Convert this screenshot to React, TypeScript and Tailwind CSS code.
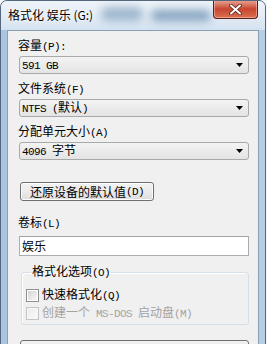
import React from "react";

function Mixed({ text }: { text: string }) {
  const parts = text.split(/([\x20-\x7e]+)/).filter(Boolean);
  return (
    <>
      {parts.map((p, i) =>
        /^[\x20-\x7e]+$/.test(p) ? (
          <span key={i} className="font-['Liberation_Mono',monospace] text-[11px] tracking-[-0.6px] whitespace-pre">
            {p}
          </span>
        ) : (
          <span key={i}>{p}</span>
        )
      )}
    </>
  );
}

function Label({ text, className = "" }: { text: string; className?: string }) {
  return (
    <div className={`h-[16px] leading-[16px] whitespace-pre ${className}`}>
      <Mixed text={text} />
    </div>
  );
}

function Combo({ text }: { text: string }) {
  return (
    <div className="ml-[1px] mt-[3px] h-[18px] w-[230px] rounded-[3px] border border-[#a9a9a9] bg-linear-to-b from-[#f3f3f3] to-[#e4e4e4] flex items-center justify-between pl-[2px] pr-[5px] leading-[16px]">
      <div className="whitespace-pre">
        <Mixed text={text} />
      </div>
      <svg width="7" height="4" viewBox="0 0 7 4">
        <polygon points="0,0 7,0 3.5,4" fill="#000" />
      </svg>
    </div>
  );
}

function Check({ text, disabled }: { text: string; disabled?: boolean }) {
  return (
    <div className={`flex items-center gap-[3px] h-[16px] leading-[16px] ${disabled ? "text-[#a3a3a3]" : "text-black"}`}>
      <div
        className={`w-[13px] h-[13px] border p-[1px] ${
          disabled ? "border-[#c4c4c4] bg-[#f7f7f7]" : "border-[#8e8f8f] bg-white"
        }`}
      >
        <div
          className={`w-full h-full ${
            disabled ? "bg-linear-to-br from-[#ececec] to-[#fafafa]" : "bg-linear-to-br from-[#d4d4d4] to-[#f7f7f7]"
          }`}
        />
      </div>
      <div className="whitespace-pre">
        <Mixed text={text} />
      </div>
    </div>
  );
}

export default function App() {
  return (
    <div className="w-[267px] h-[344px] overflow-hidden bg-[#f3f6f9] font-['Noto_Sans_CJK_SC',sans-serif] text-[12px] text-black">
      <div className="w-[266px] h-[380px] rounded-t-[7px] border border-[#54677c] bg-linear-to-r from-[#a9c4df] via-[#c9dbee] to-[#b7cde4] flex flex-col">
        <div className="relative h-[29px] flex justify-between pl-[7px] pr-[7px] rounded-t-[6px] bg-linear-to-b from-[#eef3f8] via-[#e4ecf5] to-[#d4e2f0] overflow-hidden">
          <div className="absolute left-[100px] top-[6px] w-[42px] h-[14px] rounded-full bg-[#8eabc4] blur-[4px] opacity-80" />
          <div className="absolute left-[150px] top-[9px] w-[60px] h-[11px] rounded-full bg-[#6f93b4] blur-[4px] opacity-80" />
          <div className="relative pt-[6px] leading-[16px] whitespace-pre [text-shadow:0_0_6px_#fff,0_0_3px_#fff]">
            格式化 娱乐 (G:)
          </div>
          <div className="relative -mt-[1px] w-[45px] h-[19px] rounded-b-[4px] border border-t-0 border-[#5a1f16] bg-linear-to-b from-[#e7a898] via-[#c8452f] to-[#d9704f] flex items-center justify-center shadow-[inset_0_0_0_1px_rgba(255,220,210,0.45)]">
            <svg width="13" height="11" viewBox="0 0 13 11">
              <path d="M2 1.5 L11 9.5 M11 1.5 L2 9.5" stroke="#5a1f16" strokeWidth="3.6" strokeLinecap="round" />
              <path d="M2 1.5 L11 9.5 M11 1.5 L2 9.5" stroke="#ffffff" strokeWidth="2" strokeLinecap="round" />
            </svg>
          </div>
        </div>
        <div className="mx-[6px] flex-1 border border-[#8a9fb4] bg-[#f0f0f0] pl-[10px] pt-[6px]">
          <Label text="容量(P):" />
          <Combo text="591 GB" />
          <Label text="文件系统(F)" className="mt-[6px]" />
          <Combo text="NTFS (默认)" />
          <Label text="分配单元大小(A)" className="mt-[6px]" />
          <Combo text="4096 字节" />
          <div className="ml-[2px] mt-[22px] h-[19px] w-[134px] rounded-[3px] border border-[#707070] bg-linear-to-b from-[#f2f2f2] via-[#ebebeb] to-[#dcdcdc] flex items-center justify-center leading-[16px] shadow-[inset_0_0_0_1px_#fcfcfc]">
            <Mixed text="还原设备的默认值(D)" />
          </div>
          <Label text="卷标(L)" className="mt-[13px]" />
          <div className="ml-[1px] mt-[6px] h-[20px] w-[230px] border border-[#abadb3] border-t-[#a0a3a9] bg-white flex items-center pl-[2px] leading-[16px]">
            娱乐
          </div>
          <fieldset className="ml-[3px] mt-[7px] w-[228px] rounded-[3px] border border-[#d5dfe5] pl-[4px] pb-[3px] shadow-[inset_1px_1px_0_#fff]">
            <legend className="ml-[5px] px-[1px] leading-[16px] whitespace-pre">
              <Mixed text="格式化选项(O)" />
            </legend>
            <div className="mt-[6px]">
              <Check text="快速格式化(Q)" />
            </div>
            <div className="mt-[2px]">
              <Check text="创建一个 MS-DOS 启动盘(M)" disabled />
            </div>
          </fieldset>
          <div className="ml-[2px] mt-[15px] h-[22px] w-[229px] rounded-[3px] border border-[#707070] bg-linear-to-b from-[#f2f2f2] to-[#dcdcdc]" />
        </div>
      </div>
    </div>
  );
}
